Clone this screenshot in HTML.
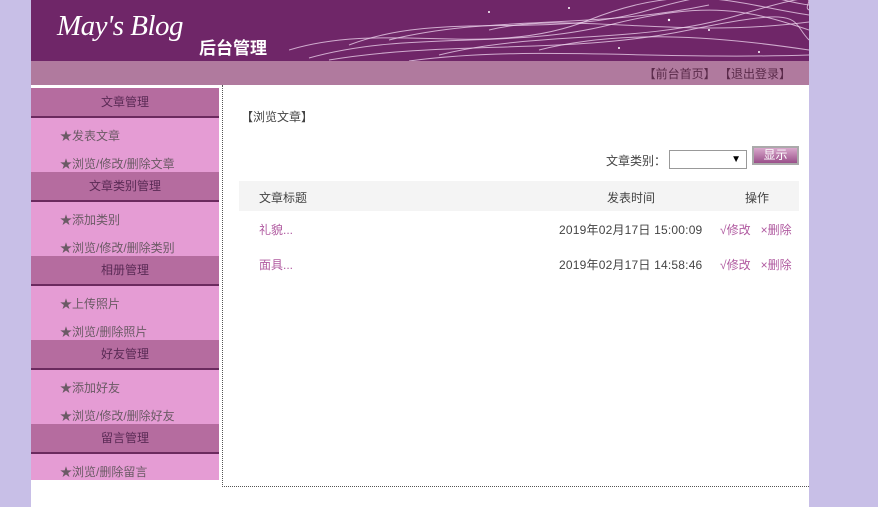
<!DOCTYPE html>
<html><head><meta charset="utf-8"><style>
*{margin:0;padding:0;box-sizing:border-box}
body{width:878px;height:507px;background:#c8bfe7;font-family:"Liberation Sans","Noto Sans CJK SC",sans-serif;font-size:12px;color:#444;position:relative;overflow:hidden}
#wrap{position:absolute;left:31px;top:0;width:778px;height:507px;background:#fff}
#hd{height:61px;background:#6f2668;position:relative;overflow:hidden}
#logo{position:absolute;left:26px;top:10px;color:#fff;font-family:"Liberation Serif",serif;font-style:italic;font-size:29px;letter-spacing:-0.5px}
#sub{position:absolute;left:168px;top:34px;color:#fff;font-size:17px;font-weight:bold}
#bar{height:24px;background:#b07a9e;text-align:right;padding-right:18px;line-height:26px;color:#5a2a4a}
#side{position:absolute;left:0;top:88px;width:188px}
.sec{height:84px;background:#e59cd4}
.t{height:30px;background:#b56c9f;border-bottom:2px solid #6b2a5e;text-align:center;line-height:28px;color:#5a2a55}
.i{height:28px;line-height:36px;padding-left:29px;color:#6b5a65}
#vl{position:absolute;left:191px;top:85px;height:402px;border-left:1px dotted #555}
#hl{position:absolute;left:191px;top:486px;width:587px;border-top:1px dotted #555}
.a{position:absolute;color:#444}
.p{color:#b05aa0}
</style></head><body><div id="wrap">
<div id="hd">
<svg width="520" height="61" style="position:absolute;left:258px;top:0" viewBox="0 0 520 61"><g fill="none" stroke="#f0d8f0" stroke-opacity=".75" stroke-width="1">
<path d="M0 50 C100 20 200 60 300 20 S450 5 520 15"/><path d="M20 58 C120 30 220 50 320 25 S460 10 520 30"/><path d="M60 45 C150 10 260 40 360 10 S480 0 520 5"/><path d="M40 60 C160 40 280 55 400 30 S500 20 520 40"/><path d="M100 40 C200 15 300 30 420 5"/><path d="M150 55 C250 30 350 45 450 15 S510 5 520 10"/><path d="M200 30 C280 10 380 40 520 22"/><path d="M250 50 C330 30 420 35 520 50"/><path d="M120 61 C240 45 360 60 520 55"/></g>
<g fill="#fff"><circle cx="200" cy="12" r="1"/><circle cx="330" cy="48" r="1"/><circle cx="420" cy="30" r="1"/><circle cx="470" cy="52" r="1"/><circle cx="280" cy="8" r="1"/><circle cx="380" cy="20" r="1.2"/></g></svg>
<div id="logo">May's Blog</div><div id="sub">后台管理</div></div>
<div id="bar">【前台首页】 【退出登录】</div>
<div id="side">
<div class="sec"><div class="t">文章管理</div><div class="i">★发表文章</div><div class="i">★浏览/修改/删除文章</div></div>
<div class="sec"><div class="t">文章类别管理</div><div class="i">★添加类别</div><div class="i">★浏览/修改/删除类别</div></div>
<div class="sec"><div class="t">相册管理</div><div class="i">★上传照片</div><div class="i">★浏览/删除照片</div></div>
<div class="sec"><div class="t">好友管理</div><div class="i">★添加好友</div><div class="i">★浏览/修改/删除好友</div></div>
<div class="sec" style="height:56px"><div class="t">留言管理</div><div class="i">★浏览/删除留言</div></div>
</div>
<div id="vl"></div><div id="hl"></div>
<div class="a" style="left:210px;top:108px">【浏览文章】</div>
<div class="a" style="left:575px;top:152px">文章类别：</div>
<div class="a" style="left:638px;top:150px;width:78px;height:19px;border:1px solid #999;text-align:right;padding-right:5px;font-size:10px;line-height:17px;color:#000">▼</div>
<div class="a" style="left:721px;top:146px;width:47px;height:19px;border:2px solid #aaa;background:linear-gradient(#d9a8cc,#9a4f8a);color:#fff;text-align:center;line-height:15px">显示</div>
<div class="a" style="left:208px;top:181px;width:560px;height:30px;background:#f4f4f4"></div>
<div class="a" style="left:228px;top:189px">文章标题</div>
<div class="a" style="left:576px;top:189px">发表时间</div>
<div class="a" style="left:714px;top:189px">操作</div>
<div class="a p" style="left:228px;top:221px">礼貌...</div>
<div class="a" style="left:528px;top:221px;letter-spacing:0.2px">2019年02月17日 15:00:09</div>
<div class="a p" style="left:689px;top:221px">√修改 &nbsp;&nbsp;×删除</div>
<div class="a p" style="left:228px;top:256px">面具...</div>
<div class="a" style="left:528px;top:256px;letter-spacing:0.2px">2019年02月17日 14:58:46</div>
<div class="a p" style="left:689px;top:256px">√修改 &nbsp;&nbsp;×删除</div>
</div></body></html>
